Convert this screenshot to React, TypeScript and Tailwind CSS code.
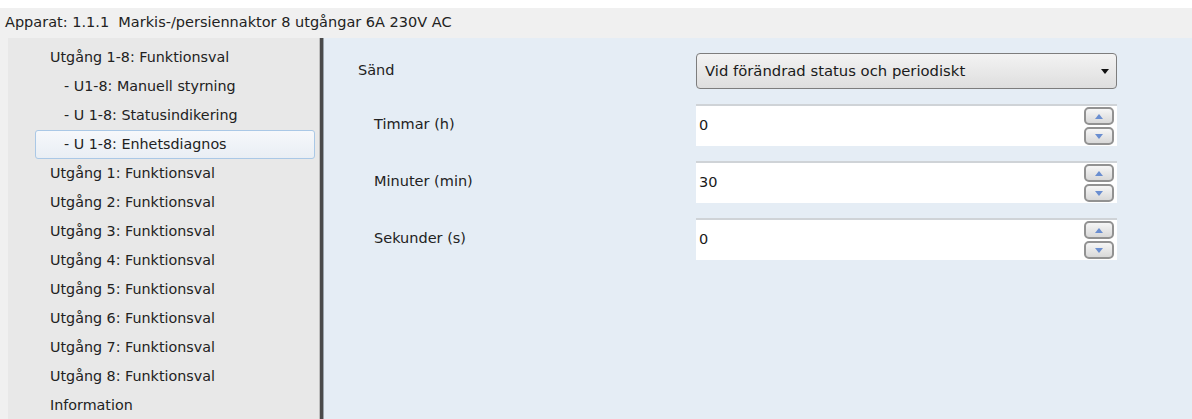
import React from 'react';

const FONT = { fontFamily: '"DejaVu Sans", Tahoma, sans-serif' };

type NavItem = { label: string; sub?: boolean; active?: boolean };

const NAV: NavItem[] = [
  { label: 'Utgång 1-8: Funktionsval' },
  { label: '- U1-8: Manuell styrning', sub: true },
  { label: '- U 1-8: Statusindikering', sub: true },
  { label: '- U 1-8: Enhetsdiagnos', sub: true, active: true },
  { label: 'Utgång 1: Funktionsval' },
  { label: 'Utgång 2: Funktionsval' },
  { label: 'Utgång 3: Funktionsval' },
  { label: 'Utgång 4: Funktionsval' },
  { label: 'Utgång 5: Funktionsval' },
  { label: 'Utgång 6: Funktionsval' },
  { label: 'Utgång 7: Funktionsval' },
  { label: 'Utgång 8: Funktionsval' },
  { label: 'Information' },
];

const SpinButton: React.FC<{ dir: 'up' | 'down' }> = ({ dir }) => (
  <div className="w-[30px] h-[18px] rounded-[5px] border-2 border-[#929292] bg-gradient-to-b from-[#f6f6f6] to-[#d8d8d8] flex items-center justify-center">
    <svg width="8" height="5" viewBox="0 0 8 5">
      {dir === 'up' ? (
        <polygon points="4,0 8,5 0,5" fill="#6a8ed0" />
      ) : (
        <polygon points="0,0 8,0 4,5" fill="#6a8ed0" />
      )}
    </svg>
  </div>
);

const NumberField: React.FC<{ label: string; value: string }> = ({ label, value }) => (
  <div className="flex items-center h-[42px]">
    <div className="w-[372px] pl-[50px] text-[14.5px] text-[#222]">{label}</div>
    <div className="w-[421px] h-full bg-white border-t-2 border-[#cfd3d7] flex items-center justify-between pl-[3px] pr-[3px]">
      <span className="text-[14.5px] text-[#1a1a1a]">{value}</span>
      <div className="flex flex-col gap-[2px]">
        <SpinButton dir="up" />
        <SpinButton dir="down" />
      </div>
    </div>
  </div>
);

export default function App() {
  return (
    <div className="w-[1192px] h-[419px] overflow-hidden bg-[#f0f0f0] flex flex-col" style={FONT}>
      <div className="h-[8px] bg-white" />
      {/* device header */}
      <div className="h-[30px] flex items-center pl-[5px] text-[14.5px] text-[#222] whitespace-pre">
        Apparat: 1.1.1  Markis-/persiennaktor 8 utgångar 6A 230V AC
      </div>

      <div className="flex flex-1 min-h-0">
        {/* parameter tree */}
        <div className="ml-[8px] w-[311px] bg-[#e8e8e8] pt-[5px] pr-[4px]">
          {NAV.map((item) => (
            <div
              key={item.label}
              className={`h-[29px] flex items-center text-[14.3px] text-[#222] whitespace-nowrap ${
                item.active
                  ? 'ml-[27px] rounded-[3px] border border-[#aac8e6] bg-gradient-to-b from-[#f6f8fb] to-[#e9eef4] pl-[28px]'
                  : item.sub
                  ? 'pl-[56px]'
                  : 'pl-[42px]'
              }`}
            >
              {item.label}
            </div>
          ))}
        </div>

        {/* splitter */}
        <div className="w-[5px] flex">
          <div className="w-px bg-[#bdbdbd]" />
          <div className="w-[3px] bg-[#4a4a4a]" />
          <div className="w-px bg-[#9aa3ab]" />
        </div>

        {/* parameter page */}
        <div className="flex-1 bg-[#e5edf5] pt-[15px] flex flex-col gap-[15px]">
          <div className="flex items-center h-[36px]">
            <div className="w-[372px] pl-[34px] text-[14.5px] text-[#222]">Sänd</div>
            <div className="w-[421px] h-full rounded-[4px] border border-[#7d7d7d] bg-gradient-to-b from-[#f3f3f3] to-[#dedede] flex items-center justify-between pl-[8px] pr-[7px]">
              <span className="text-[14.8px] text-[#1a1a1a] whitespace-nowrap">Vid förändrad status och periodiskt</span>
              <svg width="8" height="5" viewBox="0 0 8 5">
                <polygon points="0,0 8,0 4,5" fill="#111" />
              </svg>
            </div>
          </div>
          <NumberField label="Timmar (h)" value="0" />
          <NumberField label="Minuter (min)" value="30" />
          <NumberField label="Sekunder (s)" value="0" />
        </div>
      </div>
    </div>
  );
}
